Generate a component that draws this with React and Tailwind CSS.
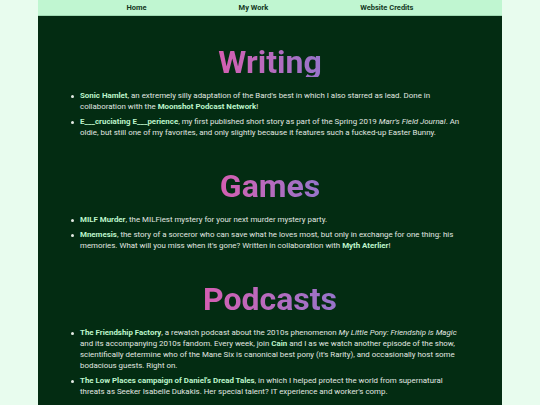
import React from "react";

const B = ({ children }) => (
  <span className="font-bold text-[#bdf5cb]">{children}</span>
);
const I = ({ children }) => <span className="italic">{children}</span>;

function Item({ children }) {
  return (
    <li className="flex">
      <span className="w-[11px] shrink-0 pl-[2px] pt-[4.5px]">
        <span className="block w-[3px] h-[3px] rounded-full bg-[#e3e9e3]" />
      </span>
      <span className="flex-1">{children}</span>
    </li>
  );
}

function Section({ title, first, children }) {
  return (
    <section className={first ? "pt-[31px]" : "pt-[33px]"}>
      <div className="flex justify-center">
        <h2 className="inline-block text-[32px] leading-[30px] font-bold bg-gradient-to-r from-[#d45eb1] to-[#9674ca] bg-clip-text text-transparent">
          {title}
        </h2>
      </div>
      <ul className="mt-[13px] flex flex-col gap-[4px] pl-[31px] pr-[34px]">
        {children}
      </ul>
    </section>
  );
}

export default function App() {
  return (
    <div className="min-h-screen bg-[#e8fcee] font-['Roboto','Noto_Sans',sans-serif]">
      <div className="w-[464px] mx-auto min-h-screen bg-[#032c12] flex flex-col">
        <nav className="h-[16px] bg-[#c0f6d1] border-b border-[#9fd9b3] flex items-center justify-center gap-[92px] text-[7.5px] font-bold text-[#14391f] pt-[1px]">
          <span>Home</span>
          <span>My Work</span>
          <span>Website Credits</span>
        </nav>
        <main className="text-[7.9px] leading-[11px] text-[#e1e7e1] pb-[20px]">
          <Section title="Writing" first>
            <Item>
              <B>Sonic Hamlet</B>, an extremely silly adaptation of the Bard's best in which I also starred as lead. Done in collaboration with the <B>Moonshot Podcast Network</B>!
            </Item>
            <Item>
              <B>E___cruciating E___perience</B>, my first published short story as part of the Spring 2019 <I>Marr's Field Journal</I>. An oldie, but still one of my favorites, and only slightly because it features such a fucked-up Easter Bunny.
            </Item>
          </Section>
          <Section title="Games">
            <Item>
              <B>MILF Murder</B>, the MILFiest mystery for your next murder mystery party.
            </Item>
            <Item>
              <B>Mnemesis</B>, the story of a sorceror who can save what he loves most, but only in exchange for one thing: his memories. What will you miss when it's gone? Written in collaboration with <B>Myth Aterlier</B>!
            </Item>
          </Section>
          <Section title="Podcasts">
            <Item>
              <B>The Friendship Factory</B>, a rewatch podcast about the 2010s phenomenon <I>My Little Pony: Friendship is Magic</I> and its accompanying 2010s fandom. Every week, join <B>Cain</B> and I as we watch another episode of the show, scientifically determine who of the Mane Six is canonical best pony (it's Rarity), and occasionally host some bodacious guests. Right on.
            </Item>
            <Item>
              <B>The Low Places campaign of Daniel's Dread Tales</B>, in which I helped protect the world from supernatural threats as Seeker Isabelle Dukakis. Her special talent? IT experience and worker's comp.
            </Item>
          </Section>
        </main>
      </div>
    </div>
  );
}
